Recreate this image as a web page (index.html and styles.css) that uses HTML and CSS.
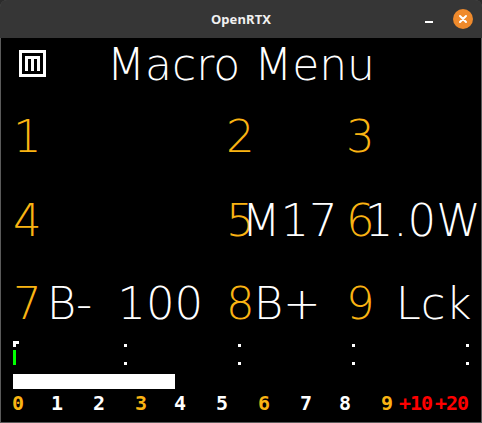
FILE: index.html
```html
<!DOCTYPE html>
<html>
<head>
<meta charset="utf-8">
<title>OpenRTX</title>
<link rel="stylesheet" href="styles.css">
</head>
<body>
<div class="window">
  <header class="titlebar">
    <div class="tb-spacer"></div>
    <div class="tb-title">OpenRTX</div>
    <div class="tb-controls">
      <span class="tb-min"></span>
      <span class="tb-close"><svg width="10" height="10" viewBox="0 0 10 10"><path d="M2 2 L8 8 M8 2 L2 8" stroke="#fff" stroke-width="2" stroke-linecap="round"/></svg></span>
    </div>
  </header>
  <main class="screen">
    <div class="menu-head">
      <svg class="macro-icon" width="27" height="27" viewBox="0 0 9 9" shape-rendering="crispEdges">
        <path fill="#fff" fill-rule="evenodd" d="M0 0H9V9H0Z M1 1V8H8V1Z"/>
        <rect x="2" y="2" width="5" height="1" fill="#fff"/>
        <rect x="2" y="2" width="1" height="5" fill="#fff"/>
        <rect x="4" y="2" width="1" height="5" fill="#fff"/>
        <rect x="6" y="2" width="1" height="5" fill="#fff"/>
      </svg>
      <div class="menu-title">Macro Menu</div>
    </div>

    <div class="row row1">
      <div class="cell"><span class="key">1</span></div>
      <div class="cell"><span class="key">2</span></div>
      <div class="cell"><span class="key">3</span></div>
    </div>
    <div class="row row2">
      <div class="cell"><span class="key">4</span></div>
      <div class="cell"><span class="key">5</span><span class="val v-mode">M17</span></div>
      <div class="cell"><span class="key">6</span><span class="val v-power">1.0W</span></div>
    </div>
    <div class="row row3">
      <div class="cell"><span class="key">7</span><span class="val v-bminus">B-</span><span class="val v-bright">100</span></div>
      <div class="cell"><span class="key">8</span><span class="val v-bplus">B+</span></div>
      <div class="cell"><span class="key">9</span><span class="val v-lock">Lck</span></div>
    </div>

    <svg class="meter" width="480" height="24" viewBox="0 0 480 24" shape-rendering="crispEdges">
      <rect x="12" y="0" width="6" height="3" fill="#fff"/>
      <rect x="12" y="3" width="3" height="3" fill="#fff"/>
      <rect x="12" y="9" width="3" height="15" fill="#00ff00"/>
      <rect x="123" y="3" width="3" height="3" fill="#fff"/>
      <rect x="123" y="21" width="3" height="3" fill="#fff"/>
      <rect x="237" y="3" width="3" height="3" fill="#fff"/>
      <rect x="237" y="21" width="3" height="3" fill="#fff"/>
      <rect x="351" y="3" width="3" height="3" fill="#fff"/>
      <rect x="351" y="21" width="3" height="3" fill="#fff"/>
      <rect x="465" y="3" width="3" height="3" fill="#fff"/>
      <rect x="465" y="21" width="3" height="3" fill="#fff"/>
    </svg>

    <div class="level-bar"></div>

    <div class="scale">
      <span class="s-or">0</span>
      <span>1</span>
      <span>2</span>
      <span class="s-or">3</span>
      <span>4</span>
      <span>5</span>
      <span class="s-or">6</span>
      <span>7</span>
      <span>8</span>
      <span class="s-or">9</span>
      <span class="s-red">+10</span>
      <span class="s-red">+20</span>
    </div>
  </main>
</div>
</body>
</html>
```

FILE: styles.css
```css
* {
  box-sizing: border-box;
  margin: 0;
  padding: 0;
}

html,
body {
  width: 482px;
  height: 423px;
  overflow: hidden;
  background: #2c2c2c;
}

.window {
  width: 482px;
  height: 423px;
  display: flex;
  flex-direction: column;
  background: #5a5a5a;
  border-radius: 7px 7px 0 0;
  overflow: hidden;
}

.titlebar {
  height: 38px;
  flex: none;
  display: grid;
  grid-template-columns: 1fr auto 1fr;
  align-items: center;
  background: #363636;
  color: #f0f0f0;
}

.tb-title {
  font: 700 13px "Noto Sans", sans-serif;
  letter-spacing: 0.1px;
}

.tb-controls {
  justify-self: end;
  display: flex;
  align-items: center;
  gap: 20px;
  padding-right: 9px;
}

.tb-min {
  width: 8px;
  height: 2px;
  background: #ffffff;
  margin-top: 6px;
}

.tb-close {
  width: 20px;
  height: 20px;
  border-radius: 50%;
  background: #ef8a2c;
  display: flex;
  align-items: center;
  justify-content: center;
}

.screen {
  flex: none;
  width: 480px;
  height: 384px;
  margin: 0 1px;
  background: #000000;
  display: flex;
  flex-direction: column;
  font-family: "DejaVu Sans", sans-serif;
  font-weight: 200;
  color: #ffffff;
}

.menu-head {
  height: 48px;
  flex: none;
  display: grid;
}

.macro-icon {
  grid-area: 1 / 1;
  justify-self: start;
  margin: 12px 0 0 18px;
}

.menu-title {
  grid-area: 1 / 1;
  justify-self: center;
  margin-top: 4px;
  font-size: 44px;
  line-height: 45px;
  white-space: nowrap;
}

.row {
  flex: none;
  display: grid;
  grid-template-columns: 213px 120px 1fr;
  padding-left: 12px;
  height: 45px;
  font-size: 45px;
  line-height: 45px;
  white-space: nowrap;
}

.row1 { margin-top: 28px; }
.row2 { margin-top: 39px; }
.row3 { margin-top: 38px; }

.key {
  color: #fab413;
}

.val {
  color: #ffffff;
}

.v-mode { margin-left: -13px; }
.v-power { margin-left: -10px; }
.v-bminus { margin-left: 5px; }
.v-bright { margin-left: 25px; }
.v-bplus { margin-left: -1px; }
.v-lock { margin-left: 21px; }

.meter {
  flex: none;
  display: block;
  margin-top: 15px;
}

.level-bar {
  flex: none;
  margin: 9px 0 0 12px;
  width: 162px;
  height: 15px;
  background: #ffffff;
}

.scale {
  flex: none;
  margin-top: 4px;
  height: 20px;
  display: grid;
  grid-template-columns: 39px 42px 42px 39px 42px 42px 42px 39px 42px 18px 36px auto;
  padding-left: 11px;
  font-family: "DejaVu Sans Mono", monospace;
  font-weight: 700;
  font-size: 20px;
  line-height: 20px;
  color: #ffffff;
  white-space: nowrap;
}

.s-or { color: #fab413; }
.s-red { color: #ff0000; letter-spacing: -1px; }
```
